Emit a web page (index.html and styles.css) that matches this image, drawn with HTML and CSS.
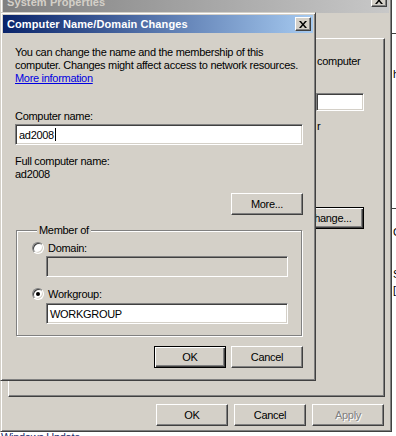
FILE: index.html
```html
<!DOCTYPE html>
<html lang="en">

<head>
    <meta charset="UTF-8">
    <meta name="viewport" content="width=device-width, initial-scale=1.0">
    <title>Computer Name/Domain Changes</title>
    <link rel="stylesheet" href="styles.css">
</head>

<body>
    <div class="screen">
        <div class="window sysprops">
            <div class="titlebar inactive">
                <span class="title">System Properties</span>
                <span class="close"><svg width="8" height="7" viewBox="0 0 8 7"><path d="M0 0h2l2 2.5L6 0h2L5 3.5 8 7H6L4 4.5 2 7H0l3-3.5z" /></svg></span>
            </div>
            <div class="tabs">
                <span class="tab"></span>
            </div>
            <div class="panel">
                <p class="frag">computer</p>
                <div class="field desc"></div>
                <p class="frag note">r</p>
                <button class="btn default change">Change...</button>
            </div>
            <div class="actions">
                <button class="btn">OK</button>
                <button class="btn">Cancel</button>
                <button class="btn" disabled>Apply</button>
            </div>
        </div>

        <div class="side-doc">
            <span class="rule r1"></span>
            <span class="ch c1">h</span>
            <span class="rule r2"></span>
            <span class="ch c2">C</span>
            <span class="ch c3">S</span>
            <span class="ch c4">[</span>
        </div>

        <div class="taskline">Windows Update</div>

        <div class="window dialog">
            <div class="titlebar">
                <span class="title">Computer Name/Domain Changes</span>
                <span class="close"><svg width="8" height="7" viewBox="0 0 8 7"><path d="M0 0h2l2 2.5L6 0h2L5 3.5 8 7H6L4 4.5 2 7H0l3-3.5z" /></svg></span>
            </div>
            <div class="dialog-body">
                <p class="intro">You can change the name and the membership of this<br>computer. Changes might affect access to network resources.<br><a href="#">More information</a></p>

                <p class="label name-label">Computer name:</p>
                <div class="field"><span>ad2008</span><span class="caret"></span></div>

                <p class="label full-label">Full computer name:</p>
                <p class="label">ad2008</p>

                <div class="row-end more-row">
                    <button class="btn">More...</button>
                </div>

                <fieldset class="group">
                    <legend>Member of</legend>
                    <div class="option"><span class="radio"></span>Domain:</div>
                    <div class="field disabled inset"></div>
                    <div class="option workgroup"><span class="radio checked"></span>Workgroup:</div>
                    <div class="field inset">WORKGROUP</div>
                </fieldset>

                <div class="row-end ok-row">
                    <button class="btn default">OK</button>
                    <button class="btn">Cancel</button>
                </div>
            </div>
        </div>
    </div>
</body>

</html>
```

FILE: styles.css
```css
body {
    margin: 0;
    padding: 0;
    font-family: "Liberation Sans", Arial, sans-serif;
    font-size: 11px;
    letter-spacing: -0.3px;
    color: #000;
}

p {
    margin: 0;
}

.screen {
    position: relative;
    width: 396px;
    height: 436px;
    overflow: hidden;
    background: #fff;
}

/* classic raised window frame */
.window {
    position: absolute;
    box-sizing: border-box;
    background-color: #d4d0c8;
    border: 1px solid;
    border-color: #d4d0c8 #404040 #404040 #d4d0c8;
    box-shadow: inset 1px 1px #fff, inset -1px -1px #808080;
    padding: 2px;
    display: flex;
    flex-direction: column;
}

.sysprops {
    left: 0;
    top: -8px;
    width: 392px;
    height: 440px;
}

.dialog {
    left: 0;
    top: 12px;
    width: 316px;
    height: 369px;
}

.titlebar {
    height: 18px;
    flex-shrink: 0;
    display: flex;
    align-items: center;
    justify-content: space-between;
    padding: 0 2px 0 4px;
    background: linear-gradient(to right, #0a246a, #a6caf0);
    color: #fff;
    font-weight: bold;
    letter-spacing: 0.1px;
}

.titlebar.inactive {
    background: linear-gradient(to right, #808080, #c8c8c8);
    color: #d4d0c8;
    align-items: flex-start;
}

.titlebar.inactive .title {
    margin-top: 1px;
}

.close {
    box-sizing: border-box;
    width: 16px;
    height: 14px;
    display: flex;
    align-items: center;
    justify-content: center;
    background-color: #d4d0c8;
    border: 1px solid;
    border-color: #fff #404040 #404040 #fff;
    box-shadow: inset -1px -1px #808080;
}

.inactive .close {
    margin-top: -2px;
}

.tabs {
    height: 25px;
    display: flex;
    align-items: flex-end;
    padding-left: 5px;
}

.tab {
    width: 90px;
    height: 18px;
    border: 1px solid;
    border-color: #fff #404040 transparent #fff;
}

.panel {
    flex: 1;
    margin: 0 4px 0 5px;
    padding: 16px 0 0 307px;
    border: 1px solid;
    border-color: #fff #404040 #404040 #fff;
    box-shadow: inset -1px -1px #808080;
}

.frag {
    line-height: 13px;
    padding-left: 1px;
    white-space: nowrap;
}

.field {
    box-sizing: border-box;
    height: 21px;
    display: flex;
    align-items: center;
    padding-left: 3px;
    background: #fff;
    border: 1px solid;
    border-color: #808080 #fff #fff #808080;
    box-shadow: inset 1px 1px #404040, inset -1px -1px #d4d0c8;
}

.field.desc {
    width: 48px;
    height: 18px;
    margin-top: 25px;
}

.field.disabled {
    background: #d4d0c8;
}

.frag.note {
    margin-top: 9px;
}

.btn {
    box-sizing: border-box;
    width: 72px;
    height: 22px;
    padding: 0;
    font-family: inherit;
    font-size: 11px;
    letter-spacing: inherit;
    color: #000;
    background-color: #d4d0c8;
    border: 1px solid;
    border-color: #fff #404040 #404040 #fff;
    box-shadow: inset -1px -1px #808080;
}

.btn.default {
    border-color: #000;
    box-shadow: inset 1px 1px #fff, inset -1px -1px #404040, inset -2px -2px #808080;
}

.btn:disabled {
    color: #808080;
    text-shadow: 1px 1px #fff;
}

.btn.change {
    margin-top: 74px;
    margin-left: -22px;
    width: 70px;
}

.actions {
    display: flex;
    justify-content: flex-end;
    gap: 6px;
    margin: 7px 5px 3px 0;
}

/* dialog content */
.dialog-body {
    padding: 13px 10px 0 12px;
}

.intro {
    line-height: 13px;
    white-space: nowrap;
}

.intro a {
    color: #0000e0;
}

.label {
    line-height: 13px;
}

.name-label {
    margin-top: 25px;
    margin-bottom: 1px;
}

.full-label {
    margin-top: 10px;
}

.caret {
    width: 1px;
    height: 13px;
    margin-left: 1px;
    background: #000;
}

.row-end {
    display: flex;
    justify-content: flex-end;
    gap: 5px;
}

.more-row {
    margin-top: 12px;
}

.group {
    margin: 9px 1px 0;
    padding: 4px 13px 11px 15px;
    border: 1px solid #808080;
    box-shadow: 1px 1px 0 #fff, inset 1px 1px #fff;
}

.group legend {
    padding: 0 2px;
    margin-left: 5px;
    line-height: 13px;
    background-color: #d4d0c8;
}

.option {
    display: flex;
    align-items: center;
    gap: 4px;
    height: 13px;
}

.option.workgroup {
    margin-top: 10px;
}

.field.inset {
    margin: 2px 0 0 14px;
}

.option.workgroup + .field {
    margin-top: 3px;
}

.radio {
    box-sizing: border-box;
    position: relative;
    width: 12px;
    height: 12px;
    border-radius: 50%;
    background: #fff;
    border: 1px solid;
    border-color: #808080 #fff #fff #808080;
    box-shadow: inset 1px 1px #404040, inset -1px -1px #d4d0c8;
}

.radio.checked::after {
    content: "";
    position: absolute;
    left: 3px;
    top: 3px;
    width: 4px;
    height: 4px;
    border-radius: 50%;
    background: #000;
}

.ok-row {
    margin-top: 10px;
}

/* bits of other windows behind */
.side-doc {
    position: absolute;
    left: 392px;
    top: 0;
    width: 4px;
    height: 436px;
    background: #fff;
}

.rule {
    position: absolute;
    left: 0;
    width: 4px;
    height: 1px;
    background: #404040;
}

.r1 {
    top: 33px;
}

.r2 {
    top: 208px;
}

.ch {
    position: absolute;
    left: 1px;
    line-height: 13px;
}

.c1 {
    top: 68px;
}

.c2 {
    top: 226px;
}

.c3 {
    top: 268px;
}

.c4 {
    top: 284px;
}

.taskline {
    position: absolute;
    left: 0;
    top: 432px;
    width: 396px;
    height: 4px;
    overflow: hidden;
    background: #fff;
    color: #1c2a6a;
    line-height: 11px;
    padding-left: 1px;
}
```
